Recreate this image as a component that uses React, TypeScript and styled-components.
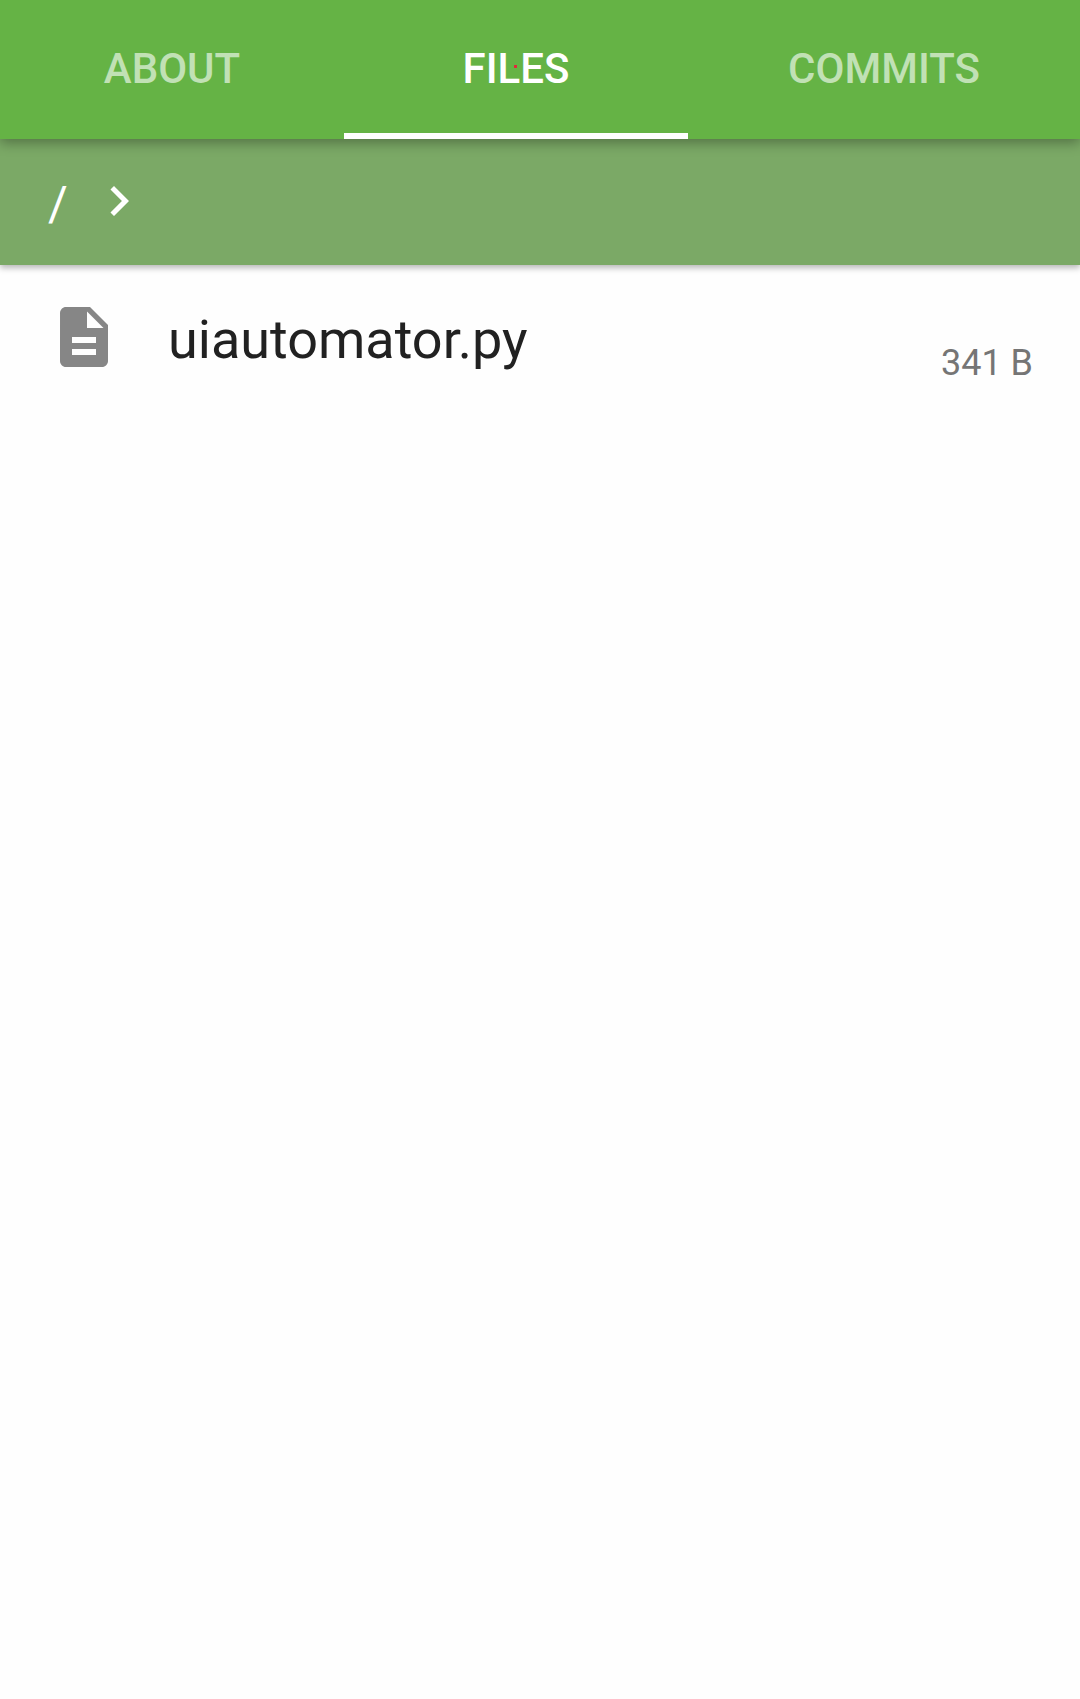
import React, { useState } from "react";
import styled, { createGlobalStyle } from "styled-components";

const GlobalStyle = createGlobalStyle`
  *, *::before, *::after { box-sizing: border-box; }
  body {
    margin: 0;
    background: #fefefe;
    font-family: Roboto, "Noto Sans", sans-serif;
  }
`;

const Page = styled.div`
  display: flex;
  flex-direction: column;
  min-height: 100vh;
  background: #fefefe;
`;

const TabBar = styled.div`
  position: relative;
  z-index: 2;
  display: grid;
  grid-template-columns: 43fr 43fr 49fr;
  background: #65b345;
  box-shadow: 0 4px 12px rgba(0, 0, 0, 0.32);
`;

const Tab = styled.button<{ $active: boolean }>`
  position: relative;
  padding: 44px 24px 40px;
  border: 0;
  border-bottom: 6px solid ${(p) => (p.$active ? "#ffffff" : "transparent")};
  background: transparent;
  color: ${(p) => (p.$active ? "#ffffff" : "#c1e1b5")};
  font: 500 42px/49px Roboto, "Noto Sans", sans-serif;
  text-transform: uppercase;
  cursor: pointer;
`;

const TabDot = styled.span`
  position: absolute;
  top: 65px;
  left: 50%;
  width: 3px;
  height: 3px;
  margin-left: -2px;
  background: #e0283c;
`;

const PathBar = styled.nav`
  position: relative;
  z-index: 1;
  display: flex;
  align-items: center;
  gap: 21px;
  height: 126px;
  padding: 0 48px 3px;
  background: #7ba966;
  box-shadow: 0 3px 6px rgba(0, 0, 0, 0.28);
`;

const PathLink = styled.a`
  padding-top: 6px;
  color: #ffffff;
  font-size: 48px;
  line-height: 56px;
  text-decoration: none;
`;

const FileList = styled.ul`
  margin: 0;
  padding: 0;
  list-style: none;
`;

const FileLink = styled.a`
  display: flex;
  align-items: center;
  gap: 48px;
  height: 144px;
  padding: 0 47px 0 48px;
  color: #212121;
  text-decoration: none;
`;

const FileName = styled.span`
  flex: 1;
  padding-top: 6px;
  font-size: 54px;
  line-height: 64px;
`;

const FileSize = styled.span`
  align-self: flex-end;
  padding-bottom: 25px;
  color: #757575;
  font-size: 36px;
  line-height: 42px;
`;

const Icon = styled.svg<{ $size: number; $color: string }>`
  flex: none;
  width: ${(p) => p.$size}px;
  height: ${(p) => p.$size}px;
  fill: ${(p) => p.$color};
`;

const tabs = ["About", "Files", "Commits"];
const files = [{ name: "uiautomator.py", size: "341 B" }];

export default function App() {
  const [active, setActive] = useState("Files");
  return (
    <Page>
      <GlobalStyle />
      <TabBar role="tablist">
        {tabs.map((tab) => (
          <Tab
            key={tab}
            type="button"
            role="tab"
            aria-selected={tab === active}
            $active={tab === active}
            onClick={() => setActive(tab)}
          >
            {tab}
            {tab === active && <TabDot />}
          </Tab>
        ))}
      </TabBar>
      <PathBar aria-label="Path">
        <PathLink href="#root">/</PathLink>
        <Icon viewBox="0 0 24 24" $size={60} $color="#ffffff" aria-hidden="true">
          <path d="M10 6L8.590 7.410 13.170 12l-4.580 4.590L10 18l6-6z" />
        </Icon>
      </PathBar>
      <FileList>
        {files.map((file) => (
          <li key={file.name}>
            <FileLink href="#file">
              <Icon viewBox="0 0 24 24" $size={72} $color="#868686" aria-hidden="true">
                <path d="M14 2H6c-1.100 0-1.990.900-1.990 2L4 20c0 1.100.890 2 1.990 2H18c1.100 0 2-.900 2-2V8l-6-6zm2 16H8v-2h8v2zm0-4H8v-2h8v2zm-3-5V3.500L18.500 9H13z" />
              </Icon>
              <FileName>{file.name}</FileName>
              <FileSize>{file.size}</FileSize>
            </FileLink>
          </li>
        ))}
      </FileList>
    </Page>
  );
}
